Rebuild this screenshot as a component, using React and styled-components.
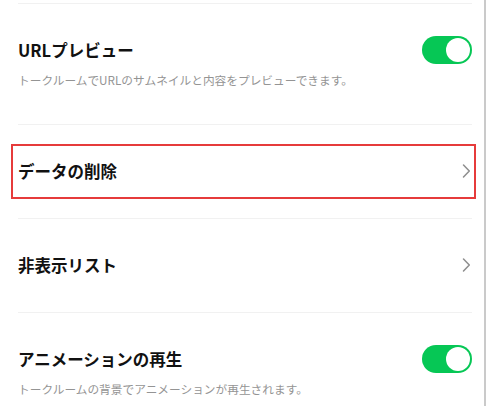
import React from "react";
import styled, { createGlobalStyle } from "styled-components";

const Global = createGlobalStyle`
  html, body { margin: 0; padding: 0; background: #fff; }
  body { font-family: "Noto Sans CJK JP", "Noto Sans", sans-serif; }
`;

const Screen = styled.div`
  width: 486px;
  height: 406px;
  box-sizing: border-box;
  border-right: 2px solid #cacaca;
  background: #fff;
  overflow: hidden;
  padding: 3px 12px 0 18px;
`;

const Row = styled.div`
  position: relative;
  border-top: 1px solid #f1f1f1;
  padding: 34px 0 ${(p) => (p.$desc ? "36px" : "35px")};
`;

const Line = styled.div`
  display: flex;
  align-items: center;
  justify-content: space-between;
  height: 24px;
`;

const Title = styled.div`
  font-size: 16.5px;
  font-weight: 700;
  color: #111;
  line-height: 24px;
  white-space: nowrap;
`;

const Desc = styled.div`
  margin-top: 10px;
  font-size: 11.7px;
  line-height: 16px;
  color: #949494;
  white-space: nowrap;
`;

const Toggle = styled.div`
  width: 50px;
  height: 28px;
  border-radius: 14px;
  background: #06c755;
  box-sizing: border-box;
  padding: 2px;
  display: flex;
  justify-content: flex-end;
`;

const Knob = styled.div`
  width: 24px;
  height: 24px;
  border-radius: 50%;
  background: #fff;
`;

const Highlight = styled.div`
  position: absolute;
  left: -7px;
  right: -4px;
  top: 19px;
  height: 55px;
  border: 2px solid #e63b3b;
  box-sizing: border-box;
  pointer-events: none;
`;

const Chevron = () => (
  <svg width="10" height="16" viewBox="0 0 10 16" style={{ marginRight: 1 }}>
    <path d="M2.5 2 L8.3 8 L2.5 14" fill="none" stroke="#8e8e8e" strokeWidth="1.5" strokeLinecap="round" strokeLinejoin="round" />
  </svg>
);

const ToggleRow = ({ title, desc }) => (
  <Row $desc>
    <Line>
      <Title>{title}</Title>
      <Toggle><Knob /></Toggle>
    </Line>
    <Desc>{desc}</Desc>
  </Row>
);

const LinkRow = ({ title, highlighted }) => (
  <Row>
    {highlighted && <Highlight />}
    <Line>
      <Title>{title}</Title>
      <Chevron />
    </Line>
  </Row>
);

export default function App() {
  return (
    <>
      <Global />
      <Screen>
        <ToggleRow title="URLプレビュー" desc="トークルームでURLのサムネイルと内容をプレビューできます。" />
        <LinkRow title="データの削除" highlighted />
        <LinkRow title="非表示リスト" />
        <ToggleRow title="アニメーションの再生" desc="トークルームの背景でアニメーションが再生されます。" />
      </Screen>
    </>
  );
}
